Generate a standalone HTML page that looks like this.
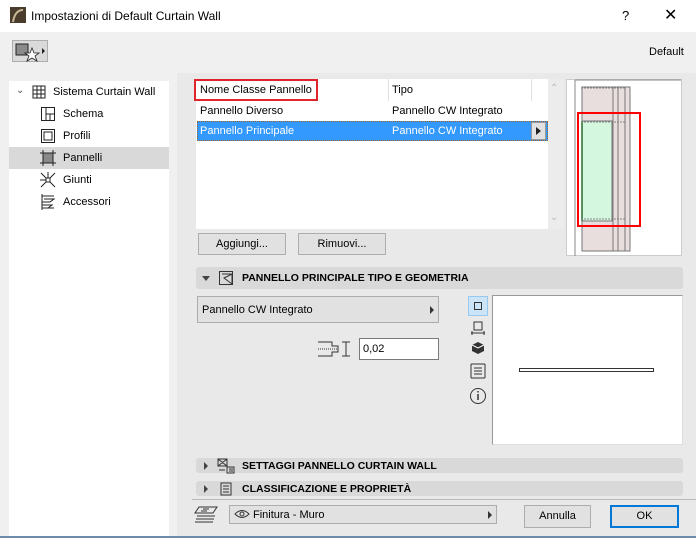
<!DOCTYPE html>
<html><head><style>
*{box-sizing:border-box;margin:0;padding:0}
body{width:696px;height:538px;background:#f0f0f0;font-family:"Liberation Sans",sans-serif;font-size:11px;color:#000;position:relative;overflow:hidden}
.a{position:absolute}
.btn{position:absolute;background:#e1e1e1;border:1px solid #adadad;text-align:center;line-height:20px;font-size:11px}
.sec{position:absolute;left:196px;width:487px;background:#d9d9d9;border-radius:3px;font-weight:bold;font-size:10.5px}
.tri{position:absolute;width:0;height:0}
</style></head><body>
<div class="a" style="left:0;top:0;width:696px;height:32px;background:#fff"></div>
<svg class="a" style="left:10px;top:7px" width="16" height="16"><rect width="16" height="16" fill="#4a3c2c"/><path d="M3 15 Q5 3 13 3" stroke="#c8b89a" stroke-width="2" fill="none"/></svg>
<div class="a" style="left:31px;top:9px;font-size:12px">Impostazioni di Default Curtain Wall</div>
<div class="a" style="left:622px;top:8px;font-size:13px">?</div>
<div class="a" style="left:664px;top:5px;font-size:16px">✕</div>
<div class="a" style="left:12px;top:40px;width:36px;height:22px;background:#dadada;border:1px solid #adadad"></div>
<svg class="a" style="left:14px;top:42px" width="34" height="20"><rect x="2" y="2" width="12" height="11" fill="#8a8a8a" stroke="#222"/><path d="M18 6 L20 11 L25 11 L21 14 L23 19 L18 16 L13 19 L15 14 L11 11 L16 11Z" fill="#fff" stroke="#222" stroke-width="0.8"/><path d="M28 6 L31 9 L28 12Z" fill="#222"/></svg>
<div class="a" style="left:649px;top:46px">Default</div>
<div class="a" style="left:9px;top:81px;width:160px;height:457px;background:#fff"></div>
<div class="a" style="left:9px;top:147px;width:160px;height:22px;background:#d9d9d9"></div>
<div class="a" style="left:16px;top:85px;font-size:10px;color:#555">⌄</div>
<svg class="a" style="left:31px;top:84px" width="16" height="16" fill="none" stroke="#222"><path d="M2 2h12v12H2zM2 6h12M2 10h12M6 2v12M10 2v12"/></svg>
<div class="a" style="left:53px;top:86px">Sistema Curtain Wall</div>
<svg class="a" style="left:40px;top:106px" width="16" height="16" fill="none" stroke="#222"><path d="M1.5 1.5h13v13h-13zM6 1.5v13M6 8h8.5M10 8v6.5"/></svg>
<div class="a" style="left:63px;top:108px">Schema</div>
<svg class="a" style="left:40px;top:128px" width="16" height="16" fill="none" stroke="#222"><path d="M1.5 1.5h13v13h-13zM4 4h8v8H4z"/></svg>
<div class="a" style="left:63px;top:130px">Profili</div>
<svg class="a" style="left:40px;top:150px" width="16" height="16"><rect x="3" y="3" width="10" height="10" fill="#888" stroke="#222"/><path d="M3 0v16M13 0v16M0 3h16M0 13h16" stroke="#222"/></svg>
<div class="a" style="left:63px;top:152px">Pannelli</div>
<svg class="a" style="left:40px;top:172px" width="16" height="16" fill="none" stroke="#222"><rect x="6" y="6" width="4" height="4"/><path d="M1 1l5 5M15 1l-5 5M1 15l5-5M15 15l-5-5M8 0v6M0 8h6"/></svg>
<div class="a" style="left:63px;top:174px">Giunti</div>
<svg class="a" style="left:40px;top:194px" width="16" height="16" fill="none" stroke="#222"><path d="M2 2h12M4 5h10l-4 3H2M2 11h10l-4 3H2M2 14h12M2 0v16"/></svg>
<div class="a" style="left:63px;top:196px">Accessori</div>
<div class="a" style="left:177px;top:73px;width:519px;height:463px;background:#e9e9e9"></div>
<div class="a" style="left:196px;top:79px;width:352px;height:150px;background:#fff"></div>
<div class="a" style="left:388px;top:79px;width:1px;height:22px;background:#e0e0e0"></div>
<div class="a" style="left:531px;top:79px;width:1px;height:22px;background:#e0e0e0"></div>
<div class="a" style="left:548px;top:79px;width:16px;height:150px;background:#ececec"></div>
<div class="a" style="left:194px;top:79px;width:124px;height:22px;border:2px solid #e0242a"></div>
<div class="a" style="left:200px;top:84px">Nome Classe Pannello</div>
<div class="a" style="left:392px;top:84px">Tipo</div>
<div class="a" style="left:200px;top:105px">Pannello Diverso</div>
<div class="a" style="left:392px;top:105px">Pannello CW Integrato</div>
<div class="a" style="left:197px;top:121px;width:351px;height:20px;background:#3399ff;border:1px dotted #a06020"></div>
<div class="a" style="left:200px;top:125px;color:#fff">Pannello Principale</div>
<div class="a" style="left:392px;top:125px;color:#fff">Pannello CW Integrato</div>
<div class="a" style="left:531px;top:122px;width:15px;height:18px;background:#e1e1e1;border:1px solid #999"></div>
<div class="tri" style="left:536px;top:127px;border-left:5px solid #222;border-top:4px solid transparent;border-bottom:4px solid transparent"></div>
<div class="a" style="left:550px;top:83px;color:#bbb;font-size:10px">⌃</div>
<div class="a" style="left:550px;top:212px;color:#bbb;font-size:10px">⌄</div>
<div class="a" style="left:566px;top:79px;width:116px;height:177px;background:#fff;border:1px solid #ccc"></div>
<svg class="a" style="left:566px;top:79px" width="116" height="177">
<path d="M9 1h106" stroke="#888"/><path d="M9 1v176" stroke="#888"/>
<rect x="16" y="8" width="48" height="164" fill="#e8dede" stroke="#777"/>
<rect x="16" y="42" width="30" height="100" fill="#d4f7df" stroke="#777"/>
<path d="M16 42v100" stroke="#2a6a2a" stroke-width="1.5"/>
<path d="M15 9h44M15 43h44M15 140h44" stroke="#888" stroke-dasharray="2 1"/>
<path d="M47 8v164M52 8v164M59 8v164" stroke="#777"/>
<rect x="12" y="34" width="62" height="113" fill="none" stroke="#f00" stroke-width="2"/>
</svg>
<div class="btn" style="left:198px;top:233px;width:88px;height:22px">Aggiungi...</div>
<div class="btn" style="left:298px;top:233px;width:88px;height:22px">Rimuovi...</div>
<div class="sec" style="top:267px;height:22px"><div class="tri" style="left:6px;top:9px;border-top:5px solid #444;border-left:4px solid transparent;border-right:4px solid transparent"></div>
<svg class="a" style="left:22px;top:3px" width="16" height="16" fill="none" stroke="#333"><path d="M1.5 1.5h13v13h-13zM4 4h10v10M14 4L6 8l8 6"/></svg>
<span class="a" style="left:46px;top:5px">PANNELLO PRINCIPALE TIPO E GEOMETRIA</span></div>
<div class="a" style="left:197px;top:296px;width:242px;height:27px;background:#e1e1e1;border:1px solid #adadad"></div>
<div class="a" style="left:202px;top:304px">Pannello CW Integrato</div>
<div class="tri" style="left:430px;top:306px;border-left:4px solid #333;border-top:4px solid transparent;border-bottom:4px solid transparent"></div>
<svg class="a" style="left:318px;top:339px" width="36" height="20" fill="none" stroke="#333"><path d="M0 3h14v4h6v6h-6v4H0"/><path d="M0 10h20" stroke-dasharray="1 1"/><path d="M24 3h8M24 17h8M28 3v14"/></svg>
<div class="a" style="left:359px;top:338px;width:80px;height:22px;background:#fff;border:1px solid #7a7a7a;padding:4px 3px">0,02</div>
<div class="a" style="left:468px;top:296px;width:20px;height:20px;background:#cce4f7;border:1px solid #99c9ef"></div>
<div class="a" style="left:474px;top:302px;width:8px;height:8px;border:1px solid #333"></div>
<svg class="a" style="left:470px;top:320px" width="16" height="16" fill="none" stroke="#333"><path d="M4 2h8v8H4zM1 13h14" /><path d="M2 11v4M14 11v4"/></svg>
<svg class="a" style="left:471px;top:341px" width="14" height="14"><path d="M7 1L13 4v6L7 13 1 10V4z" fill="#333"/><path d="M1 4l6 3 6-3" stroke="#fff" fill="none"/></svg>
<svg class="a" style="left:469px;top:363px" width="18" height="16" fill="none" stroke="#333"><path d="M2 1v14M16 1v14M2 1h14M2 15h14M5 5h8M5 8h8M5 11h8"/></svg>
<svg class="a" style="left:469px;top:387px" width="18" height="18" fill="none" stroke="#333"><circle cx="9" cy="9" r="7.5"/><path d="M9 7v6M9 4v1.5" stroke-width="1.5"/></svg>
<div class="a" style="left:492px;top:295px;width:191px;height:150px;background:#fff;border:1px solid #999;border-right-color:#ddd;border-bottom-color:#ddd"></div>
<div class="a" style="left:519px;top:368px;width:135px;height:4px;border:1px solid #333"></div>
<div class="sec" style="top:458px;height:15px"><div class="tri" style="left:8px;top:4px;border-left:4px solid #444;border-top:4px solid transparent;border-bottom:4px solid transparent"></div>
<svg class="a" style="left:21px;top:0px" width="18" height="16" fill="none" stroke="#333"><path d="M1 1h9v7H1zM1 1l9 7M10 1L1 8M10 9h7v6h-7zM12 11h4M12 13h4M2 12h6"/></svg>
<span class="a" style="left:46px;top:2px">SETTAGGI PANNELLO CURTAIN WALL</span></div>
<div class="sec" style="top:481px;height:15px"><div class="tri" style="left:8px;top:4px;border-left:4px solid #444;border-top:4px solid transparent;border-bottom:4px solid transparent"></div>
<svg class="a" style="left:24px;top:1px" width="12" height="14" fill="none" stroke="#333"><path d="M1 1h10v12H1zM3 4h6M3 7h6M3 10h6"/></svg>
<span class="a" style="left:46px;top:2px">CLASSIFICAZIONE E PROPRIETÀ</span></div>
<div class="a" style="left:192px;top:499px;width:504px;height:1px;background:#bbb"></div>
<svg class="a" style="left:193px;top:505px" width="26" height="20" fill="none" stroke="#333"><path d="M6 2h18l-4 6H2zM4 11h18M3 14h18M2 17h18M10 4h6M8 6h6"/></svg>
<div class="a" style="left:229px;top:505px;width:268px;height:19px;background:#e1e1e1;border:1px solid #adadad"></div>
<svg class="a" style="left:234px;top:509px" width="16" height="10" fill="none" stroke="#333"><path d="M1 5Q8-2 15 5Q8 12 1 5z"/><circle cx="8" cy="5" r="2"/></svg>
<div class="a" style="left:253px;top:509px">Finitura - Muro</div>
<div class="tri" style="left:488px;top:511px;border-left:4px solid #333;border-top:4px solid transparent;border-bottom:4px solid transparent"></div>
<div class="btn" style="left:524px;top:505px;width:67px;height:23px">Annulla</div>
<div class="btn" style="left:610px;top:505px;width:69px;height:23px;border:2px solid #0078d7;line-height:19px">OK</div>
<div class="a" style="left:0;top:536px;width:696px;height:2px;background:#6d8aa8"></div>
</body></html>
